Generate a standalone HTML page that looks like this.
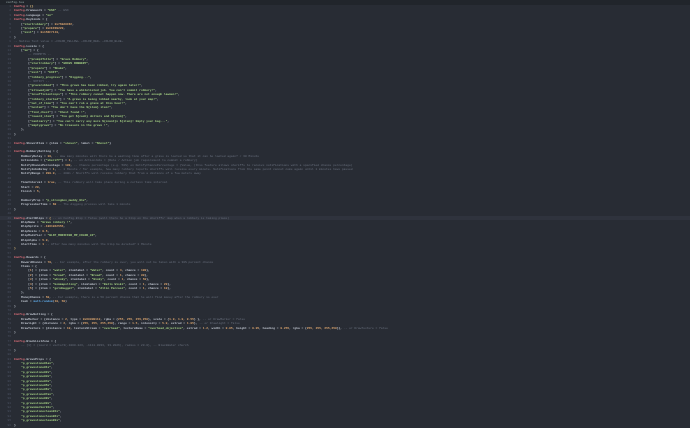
<!DOCTYPE html>
<html><head><meta charset="utf-8"><style>
html,body{margin:0;padding:0;width:690px;height:428px;overflow:hidden;background:#282c34;}
.top{position:absolute;left:0;top:0;width:690px;height:5px;background:#21252b;}
.top span{position:absolute;left:6px;top:0;font:3px/5px "Liberation Mono",monospace;color:#9aa;}
.hl{position:absolute;left:0;width:690px;top:216px;height:4.4px;background:#2f333d;}
pre{position:absolute;left:0;top:5px;margin:0;font:bold 2.95px/4.4px "Liberation Mono",monospace;color:#c0c6d0;white-space:pre;}
.n{display:inline-block;width:11px;text-align:right;color:#4b5263;margin-right:3px;font-weight:normal}
.k{color:#ef7680}.s{color:#a8d586}.c{color:#6a717f;font-weight:normal}.o{color:#e0a870}.b{color:#e5c07b}.f{color:#61afef}
</style></head><body>
<div class="top"><span>config.lua</span></div>
<div class="hl"></div>
<pre><span class="n">1</span><span class="k">Config</span> = <span class="b">{}</span>
<span class="n">2</span><span class="k">Config</span>.Framework = <span class="s">"ESX"</span> <span class="c">-- ESX</span>
<span class="n">3</span><span class="k">Config</span>.Language = <span class="s">"en"</span>
<span class="n">4</span><span class="k">Config</span>.Keybinds = {
<span class="n">5</span>    [<span class="s">"startrobbery"</span>] = <span class="o">0x760A9C6F</span>,
<span class="n">6</span>    [<span class="s">"prepare"</span>] = <span class="o">0xCEFD9220</span>,
<span class="n">7</span>    [<span class="s">"exit"</span>] = <span class="o">0x156F7119</span>,
<span class="n">8</span>}
<span class="n">9</span><span class="c">-- Native Text value = ~COLOR_YELLOW~ ~COLOR_RED~ ~COLOR_BLUE~</span>
<span class="n">10</span><span class="k">Config</span>.Locale = {
<span class="n">11</span>    [<span class="s">"en"</span>] = {
<span class="n">12</span>        <span class="c">-- PROMPTS --</span>
<span class="n">13</span>        [<span class="s">"promptTitle"</span>] = <span class="s">"Grave Robbery"</span>,
<span class="n">14</span>        [<span class="s">"startrobbery"</span>] = <span class="s">"GRAVE ROBBERY"</span>,
<span class="n">15</span>        [<span class="s">"prepare"</span>] = <span class="s">"Shake"</span>,
<span class="n">16</span>        [<span class="s">"exit"</span>] = <span class="s">"EXIT"</span>,
<span class="n">17</span>        [<span class="s">"robbery_progress"</span>] = <span class="s">"Digging..."</span>,
<span class="n">18</span>        <span class="c">-- NOTIFY --</span>
<span class="n">19</span>        [<span class="s">"graverobbed"</span>] = <span class="s">"This grave has been robbed, try again later!"</span>,
<span class="n">20</span>        [<span class="s">"allowedjob"</span>] = <span class="s">"You have a whitelisted job. You can't commit robbery!"</span>,
<span class="n">21</span>        [<span class="s">"insufficientcops"</span>] = <span class="s">"This robbery cannot happen now. There are not enough lawmen!"</span>,
<span class="n">22</span>        [<span class="s">"robbery_started"</span>] = <span class="s">"A grave is being robbed nearby, look at your map!"</span>,
<span class="n">23</span>        [<span class="s">"out_of_time"</span>] = <span class="s">"You can't rob a grave at this hour!"</span>,
<span class="n">24</span>        [<span class="s">"noitem"</span>] = <span class="s">"You don't have the ${item} item!"</span>,
<span class="n">25</span>        [<span class="s">"find_chest"</span>] = <span class="s">"Chest found !"</span>,
<span class="n">26</span>        [<span class="s">"reward_item"</span>] = <span class="s">"You got ${cash} dollars and ${item}"</span>,
<span class="n">27</span>        [<span class="s">"cantcarry"</span>] = <span class="s">"You can't carry any more ${count}x ${item}! Empty your bag..."</span>,
<span class="n">28</span>        [<span class="s">"emptygrave"</span>] = <span class="s">"No treasure in the grave !"</span>,
<span class="n">29</span>    },
<span class="n">30</span>}
<span class="n">31</span>
<span class="n">32</span><span class="k">Config</span>.ShovelItem = {item = <span class="s">"shovel"</span>, label = <span class="s">"Shovel"</span>}
<span class="n">33</span>
<span class="n">34</span><span class="k">Config</span>.RobberySetting = {
<span class="n">35</span>    RobberyDelay = <span class="o">30</span>, <span class="c">-- How many minutes will there be a waiting time after a grave is looted so that it can be looted again? / 30 Minute</span>
<span class="n">36</span>    ActionJobs = {<span class="s">"sheriff"</span>} = <span class="o">1</span>, <span class="c">-- on ActionJobs = {Role / Action job requirement to commit a robbery}</span>
<span class="n">37</span>    NotifyChancePercentage = <span class="o">100</span>, <span class="c">-- Chance percentage (e.g. 50%) on NotifyChancePercentage = {Value, (this feature allows sheriffs to receive notifications with a specified chance percentage)</span>
<span class="n">38</span>    NotifyJobsDelay = <span class="o">1</span>, <span class="c">-- 1 Minute / for example, how many robbery reports sheriffs will receive every minute. Notifications from the same point cannot come again until 1 minutes have passed</span>
<span class="n">39</span>    NotifyRange = <span class="o">200.0</span>, <span class="c">-- 200m / Sheriffs will receive robbery that from a distance of a few meters away</span>
<span class="n">40</span>
<span class="n">41</span>    TimeInterval = <span class="o">true</span>, <span class="c">-- This robbery will take place during a certain time interval</span>
<span class="n">42</span>    Start = <span class="o">20</span>,
<span class="n">43</span>    Finish = <span class="o">5</span>,
<span class="n">44</span>
<span class="n">45</span>    RobberyProp = <span class="s">"p_strongbox_muddy_01x"</span>,
<span class="n">46</span>    ProgressbarTime = <span class="o">60</span> <span class="c">-- The digging process will take 1 minute</span>
<span class="n">47</span>}
<span class="n">48</span>
<span class="n">49</span><span class="k">Config</span>.AlertBlips = <span class="b">{</span> <span class="c">-- on Config.Blip = false (will there be a blip on the sheriffs' map when a robbery is taking place)</span>
<span class="n">50</span>    BlipName = <span class="s">"Grave robbery !"</span>,
<span class="n">51</span>    BlipSprite = <span class="o">-1861922555</span>,
<span class="n">52</span>    BlipScale = <span class="o">0.5</span>,
<span class="n">53</span>    BlipModifier = <span class="s">"BLIP_MODIFIER_MP_COLOR_32"</span>,
<span class="n">54</span>    BlipAlpha = <span class="o">5.0</span>,
<span class="n">55</span>    AlertTime = <span class="o">1</span> <span class="c">-- After how many minutes will the blip be deleted? 1 Minute</span>
<span class="n">56</span><span class="b">}</span>
<span class="n">57</span>
<span class="n">58</span><span class="k">Config</span>.Rewards = {
<span class="n">59</span>    RewardChance = <span class="o">70</span>, <span class="c">-- For example, after the robbery is over, you will not be taken with a 30% percent chance</span>
<span class="n">60</span>    Items = {
<span class="n">61</span>        [<span class="o">1</span>] = {item = <span class="s">"water"</span>, itemlabel = <span class="s">"Water"</span>, count = <span class="o">4</span>, chance = <span class="o">100</span>},
<span class="n">62</span>        [<span class="o">2</span>] = {item = <span class="s">"bread"</span>, itemlabel = <span class="s">"Bread"</span>, count = <span class="o">1</span>, chance = <span class="o">80</span>},
<span class="n">63</span>        [<span class="o">3</span>] = {item = <span class="s">"whisky"</span>, itemlabel = <span class="s">"Wisky"</span>, count = <span class="o">1</span>, chance = <span class="o">50</span>},
<span class="n">64</span>        [<span class="o">4</span>] = {item = <span class="s">"kommapolling"</span>, itemlabel = <span class="s">"Balls Wiski"</span>, count = <span class="o">1</span>, chance = <span class="o">20</span>},
<span class="n">65</span>        [<span class="o">5</span>] = {item = <span class="s">"goldnugget"</span>, itemlabel = <span class="s">"Altin Parcasi"</span>, count = <span class="o">1</span>, chance = <span class="o">10</span>},
<span class="n">66</span>    },
<span class="n">67</span>    MoneyChance = <span class="o">50</span>, <span class="c">-- For example, there is a 50 percent chance that he will find money after the robbery is over</span>
<span class="n">68</span>    Cash = <span class="f">math.random</span>(<span class="o">10</span>, <span class="o">50</span>)
<span class="n">69</span>}
<span class="n">70</span>
<span class="n">71</span><span class="k">Config</span>.DrawSetting = {
<span class="n">72</span>    DrawMarker = {distance = <span class="o">2</span>, type = <span class="o">0x6903B113</span>, rgba = {<span class="o">255, 255, 255,250</span>}, scale = {<span class="o">1.0, 1.0, 0.55</span>} }, <span class="c">-- or DrawMarker = false</span>
<span class="n">73</span>    Drawlight = {distance = <span class="o">2</span>, rgba = {<span class="o">255, 255, 255,250</span>}, range = <span class="o">1.5</span>, intensity = <span class="o">5.0</span>, extrad = <span class="o">1.05</span>}, <span class="c">-- or Drawlight = false</span>
<span class="n">74</span>    DrawTexture = {distance = <span class="o">10</span>, textureStream = <span class="s">"overhead"</span>, textureName = <span class="s">"overhead_objective"</span>, extrad = <span class="o">1.2</span>, width = <span class="o">0.05</span>, height = <span class="o">0.05</span>, heading = <span class="o">0.255</span>, rgba = {<span class="o">255, 255, 255,250</span>}}, <span class="c">-- or DrawTexture = false</span>
<span class="n">75</span>}
<span class="n">76</span>
<span class="n">77</span><span class="k">Config</span>.BlackListZone = {
<span class="n">78</span>    <span class="c">-- [1] = {coord = vector3(-1000.223, -1111.0033, 33.2026), radius = 20.0}, -- BlackWater church</span>
<span class="n">79</span>}
<span class="n">80</span>
<span class="n">81</span><span class="k">Config</span>.GraveProps = {
<span class="n">82</span>    <span class="s">"p_gravestone01ax"</span>,
<span class="n">83</span>    <span class="s">"p_gravestone01x"</span>,
<span class="n">84</span>    <span class="s">"p_gravestone02x"</span>,
<span class="n">85</span>    <span class="s">"p_gravestone03x"</span>,
<span class="n">86</span>    <span class="s">"p_gravestone04x"</span>,
<span class="n">87</span>    <span class="s">"p_gravestone05x"</span>,
<span class="n">88</span>    <span class="s">"p_gravestone06x"</span>,
<span class="n">89</span>    <span class="s">"p_gravestone07ax"</span>,
<span class="n">90</span>    <span class="s">"p_gravestone08x"</span>,
<span class="n">91</span>    <span class="s">"p_gravestone09x"</span>,
<span class="n">92</span>    <span class="s">"p_gravemarker01x"</span>,
<span class="n">93</span>    <span class="s">"p_gravestoneclean01x"</span>,
<span class="n">94</span>    <span class="s">"p_gravestoneclean02x"</span>,
<span class="n">95</span>    <span class="s">"p_gravestoneclean03x"</span>,
<span class="n">96</span>}</pre>
</body></html>
